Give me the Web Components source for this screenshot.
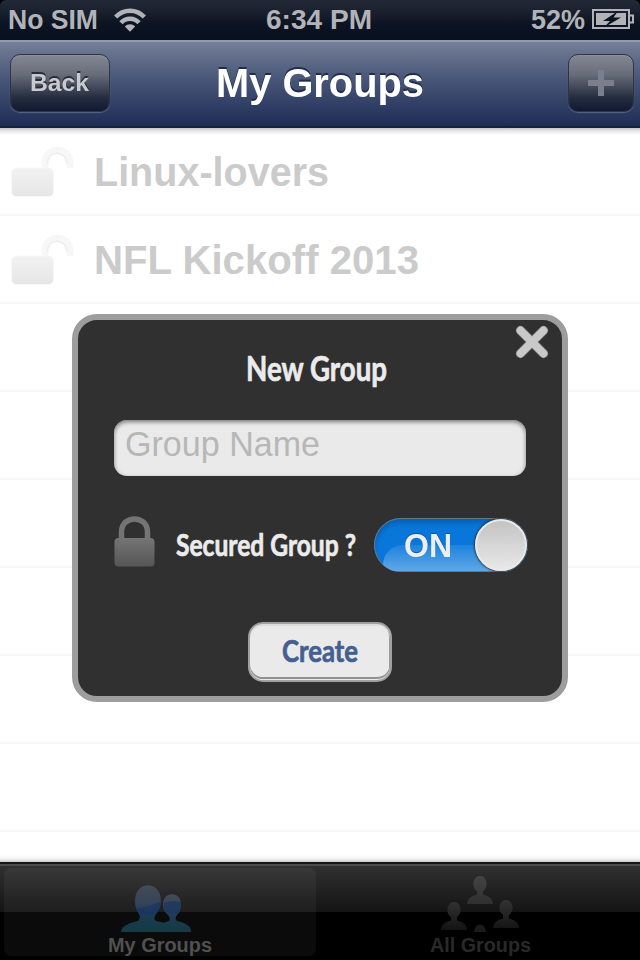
<!DOCTYPE html>
<html lang="en"><head><meta charset="utf-8"><title>My Groups</title>
<style>
body{margin:0;width:640px;height:960px;overflow:hidden;background:#fff;font-family:"Liberation Sans",Arial,sans-serif}
</style></head><body>
<groups-app></groups-app>
<script>
const define=(name,html)=>customElements.define(name,class extends HTMLElement{
  constructor(){super();const t=document.createElement('template');t.innerHTML=html;this.attachShadow({mode:'open'}).append(t.content.cloneNode(true));}
});

// Single line of text whose advance width is set exactly; the baseline is at 80% of its height.
customElements.define('fit-text',class extends HTMLElement{
  connectedCallback(){
    const w=this.getAttribute('w'),s=+this.getAttribute('size');
    const r=this.shadowRoot||this.attachShadow({mode:'open'});
    r.innerHTML=`<style>:host{display:block;flex:none;width:${w}px;height:${s}px;font-weight:bold}svg{display:block;overflow:visible}
    text{fill:currentColor;font-size:${s}px;paint-order:stroke;stroke:var(--edge,none);stroke-width:var(--edge-width,0);stroke-linejoin:round}</style>
    <svg width="${w}" height="${s}"><text x="0" y="${s*.8}" textLength="${w}" lengthAdjust="spacingAndGlyphs"></text></svg>`;
    r.querySelector('text').textContent=this.getAttribute('label');
  }
});

define('status-bar',`<style>
:host{display:grid;grid-template-columns:1fr auto 1fr;box-sizing:border-box;height:40px;padding:7px 6px 0 8px;color:#b1b3b8;background:linear-gradient(#222936 0,#1a202d 12px,#0c1322 24px,#080f1e 40px);border-radius:6px 6px 0 0}
div{display:flex;align-items:flex-start}.r{justify-content:flex-end}
.time{margin-right:4px}
.wifi{margin:1px 0 0 16px}.bat{margin:2px 0 0 7px}svg{display:block}
</style>
<div class="l"><fit-text w="90" size="27.500" label="No SIM"></fit-text>
<svg class="wifi" width="32" height="24" viewBox="0 0 32 24"><g fill="none" stroke="#b1b3b8" stroke-width="4.500"><path d="M1.600 9A19.500 19.500 0 0 1 30.400 9"/><path d="M7 14.700A12 12 0 0 1 25 14.700"/></g><path d="M10.800 18.600A7 7 0 0 1 21.200 18.600L16 23.800Z" fill="#b1b3b8"/></svg></div>
<fit-text class="time" w="106" size="28" label="6:34 PM"></fit-text>
<div class="r"><fit-text w="54" size="27.500" label="52%"></fit-text>
<svg class="bat" width="42" height="20" viewBox="0 0 42 20"><path d="M1 1H37V19H1ZM38 6.500h3v7h-3" fill="none" stroke="#b1b3b8" stroke-width="2"/><path d="M4 4H34V16H4Z" fill="#b1b3b8"/><path d="M26 2L11 12H18L12 18.500L29 8.500H21.500Z" fill="#0c1322"/></svg></div>`);

define('nav-button',`<style>
:host{display:flex;flex:none;justify-content:center;box-sizing:border-box;width:var(--w,100px);height:58px;border:1.500px solid #2e3443;border-radius:10px;background:linear-gradient(#858994,#686d7a 35%,#252d40 75%,#0e1730) border-box;box-shadow:0 1px 1px #8791a488,inset 0 1px 1px #a4a8b155;color:#c8cacf}
</style><slot></slot>`);

define('nav-bar',`<style>
:host{display:flex;justify-content:space-between;align-items:flex-start;box-sizing:border-box;height:88px;padding:12px 6px 0 10px;border-top:2px solid #929aab;border-bottom:2px solid #15213d;background:linear-gradient(#747f97,#475577 45%,#1e2d56);color:#fff}
.t{margin:11px 38px 0 0;filter:drop-shadow(0 -2px 0 #202c48)}.b{margin:17px 2px 0 0;filter:drop-shadow(0 -1.5px 0 #282d39)}
.p{--w:66px}svg{display:block;margin-top:14px}
</style><nav-button><fit-text class="b" w="59" size="24" label="Back"></fit-text></nav-button>
<fit-text class="t" w="208" size="40.500" label="My Groups"></fit-text>
<nav-button class="p"><svg width="28" height="28"><path d="M14 1V27M1 14H27" stroke="#7a7f8b" stroke-width="6"/></svg></nav-button>`);

define('group-row',`<style>
:host{display:flex;align-items:flex-start;box-sizing:border-box;height:88px;padding:18px 0 0 10px;border-bottom:2px solid #f7f7f7;color:#cbcbcb}
svg{display:block;flex:none;margin-right:20px}slot{display:block}::slotted(*){margin-top:7px}
</style><svg width="64" height="54" viewBox="0 0 64 54"><defs><linearGradient id="g" x2="0" y2="1"><stop stop-color="#f2f2f2"/><stop offset="1" stop-color="#e6e6e6"/></linearGradient></defs><path d="M35 25V18C35-.500 60-.500 60 18V22" fill="none" stroke="#f7f7f7" stroke-width="7"/><path d="M37.500 18C38 3.500 56 3.500 57 18" fill="none" stroke="#eee" stroke-width="1.500"/><rect x="1.500" y="22" width="42" height="28.500" rx="5" fill="url(#g)" stroke="#f8f8f8" stroke-width="1"/></svg><slot></slot>`);
define('empty-row',`<style>:host{display:block;box-sizing:border-box;height:88px;border-bottom:2px solid #f7f7f7}</style>`);

define('group-list',`<style>
:host{display:block;height:734px;overflow:hidden;background:linear-gradient(#c4c4c4,#e8e8e8 3px,#fff 7px,#fff 727px,#f1f1f1 731px,#ccc)}
</style><group-row><fit-text w="235" size="41" label="Linux-lovers"></fit-text></group-row>
<group-row><fit-text w="325" size="41" label="NFL Kickoff 2013"></fit-text></group-row>
<empty-row></empty-row><empty-row></empty-row><empty-row></empty-row><empty-row></empty-row><empty-row></empty-row><empty-row></empty-row>`);

define('tab-item',`<style>
:host{display:flex;flex-direction:column;align-items:center;box-sizing:border-box;width:312px;height:88px;padding-top:8px;border-radius:7px;color:#292929}
:host([selected]){background:#ffffff0b;color:#505050}
::slotted(svg){display:block;height:56px;margin-bottom:4px}
</style><slot></slot>`);

define('tab-bar',`<style>
:host{display:flex;justify-content:space-between;box-sizing:border-box;height:98px;padding:4px 4px 0;border-top:2px solid #151517;background:linear-gradient(#4c4c4c 0 2px,#303030 2px,#141414 48px,#000 48px)}
.people{margin-right:9px}
</style><tab-item selected><svg class="people" width="72" height="56" viewBox="0 0 72 56"><defs><linearGradient id="a" x2="0" y2="1"><stop stop-color="#454c55"/><stop offset=".38" stop-color="#344459"/><stop offset=".6" stop-color="#203a55"/><stop offset=".75" stop-color="#183b4c"/><stop offset="1" stop-color="#143b43"/></linearGradient></defs>
<g fill="url(#a)"><path d="M37 56C37 49 43 47 49 45Q51 43 48 39C44 36 43 32 43 28C43 15 61 15 61 28C61 33 60 36 57 39Q54 43 57 45C65 47 71 49 71 56Z"/><path d="M1 56C2 49 10 47 18 45Q21 42 19 38C16 34 15 30 15 25C15 4 41 4 41 25C41 30 39 34 36 38Q33 43 36 45C46 47 54 49 55 56Z"/></g><path d="M16 33Q28 31 40.500 26Q40 34 36 38H19ZM44 33V27Q51 24 61 26Q61 35 57 38H48Q45 36 44 33Z" fill="#193660" opacity=".75"/></svg><fit-text w="104" size="20" label="My Groups"></fit-text></tab-item>
<tab-item><svg width="80" height="56" viewBox="0 0 80 56"><defs><linearGradient id="h" gradientUnits="userSpaceOnUse" y1="0" x2="0" y2="54"><stop stop-color="#444"/><stop offset=".5" stop-color="#303030"/><stop offset="1" stop-color="#131313"/></linearGradient></defs>
<g fill="url(#h)"><path d="M27 28Q27 21 37 18.500V15C31 11 33 0 40 0C47 0 49 11 43 15V18.500Q53 21 53 28Z"/><path d="M1 54Q1 47 11 44.500V41C5 37 7 26 14 26C21 26 23 37 17 41V44.500Q27 47 27 54Z"/><path d="M53 52Q53 45 63 42.500V39C57 35 59 24 66 24C73 24 75 35 69 39V42.500Q79 45 79 52Z"/><path d="M34 56C35 46 45 46 46 56Z" fill="#1b1b1b"/></g></svg><fit-text w="101" size="20" label="All Groups"></fit-text></tab-item>`);

define('on-switch',`<style>
:host{display:flex;flex:none;align-items:flex-start;justify-content:space-between;box-sizing:border-box;width:154px;height:54px;padding:1px 1px 1px 30px;border-radius:27px;overflow:hidden;color:#eee;background:#0877d9;box-shadow:inset 0 0 0 1px #6b7781,inset 0 5px 5px #034d9688;position:relative}
i{position:absolute;left:9px;right:20px;top:27px;bottom:1px;border-radius:20px 0 0 4px;background:linear-gradient(#1c83dd,#60a7e6)}
b{position:relative;box-sizing:border-box;width:52px;height:52px;border-radius:50%;background:linear-gradient(#c3c3c3,#e8e8e8);border:2px solid #e9e9e9;box-shadow:0 0 2px 1px #333}
fit-text{position:relative;margin-top:12px;filter:drop-shadow(0 -1px 0 #0758a5)}
</style><i></i><fit-text w="48" size="33" label="ON"></fit-text><b></b>`);

define('name-field',`<style>
:host{display:block;box-sizing:border-box;width:412px;height:56px;padding:8px 0 0 11px;border-radius:13px;background:#eaeaea;box-shadow:inset 0 2px 4px #777;color:#b7b7b7}
fit-text{font-weight:normal}
</style><fit-text w="195" size="35.500" label="Group Name"></fit-text>`);

define('create-button',`<style>
:host{display:flex;justify-content:center;box-sizing:border-box;width:144px;height:60px;padding-top:13px;border:2px solid #a0a0a0;border-radius:15px;background:#eaeaea;box-shadow:inset 0 -1px 0 #eaeaea,inset 0 -3px 0 #909090,inset 0 2px 0 #ddd,inset -1px 0 0 #999;color:#465f92;font-family:Lato,sans-serif;--edge:#465f92;--edge-width:.7px}
fit-text{margin-right:1px}
</style><fit-text w="76" size="31" label="Create"></fit-text>`);

define('group-dialog',`<style>
:host{display:flex;flex-direction:column;align-items:center;position:absolute;left:72px;top:314px;box-sizing:border-box;width:496px;height:388px;border:6px solid #9d9d9d;border-radius:25px;background:#303030;color:#ebebeb;font-family:Lato,sans-serif;padding-top:33px;--edge:#ebebeb;--edge-width:.7px}
.x{position:absolute;right:12px;top:4px}
.title{margin-right:8px}name-field{margin-top:32px;font-family:"Liberation Sans",sans-serif;--edge:none}
.row{display:flex;align-items:flex-start;width:414px;height:56px;margin:40px 0 50px 2px}
.lock{width:42px;flex:none;margin-right:20px}.label{margin-top:15px}
on-switch{margin:2px 0 0 auto;font-family:"Liberation Sans",sans-serif;--edge:none}svg{display:block}
</style><svg class="x" width="36" height="36" viewBox="0 0 36 36"><path d="M6.500 6.500L29.500 29.500M29.500 6.500L6.500 29.500" stroke="#777" stroke-width="9.500" stroke-linecap="round"/><path d="M6.500 6.500L29.500 29.500M29.500 6.500L6.500 29.500" stroke="#c9c9c9" stroke-width="7.800" stroke-linecap="round"/></svg>
<fit-text class="title" w="141" size="35" label="New Group"></fit-text>
<name-field></name-field>
<div class="row"><svg class="lock" width="42" height="54" viewBox="0 0 42 54"><defs><linearGradient id="l" x2="0" y2="1"><stop stop-color="#757575"/><stop offset="1" stop-color="#555"/></linearGradient></defs><path d="M7.500 25V16C7.500-1.500 33.500-1.500 33.500 16V25" fill="none" stroke="#747474" stroke-width="5.500"/><rect x=".5" y="22" width="40" height="28.500" rx="4" fill="url(#l)"/></svg>
<fit-text class="label" w="180" size="31" label="Secured Group ?"></fit-text><on-switch></on-switch></div>
<create-button></create-button>`);

define('groups-app',`<style>:host{display:block;position:relative;width:640px;height:960px;overflow:hidden;background:#fff}.top{background:#000}</style>
<div class="top"><status-bar></status-bar></div><nav-bar></nav-bar><group-list></group-list><tab-bar></tab-bar><group-dialog></group-dialog>`);
</script></body></html>
